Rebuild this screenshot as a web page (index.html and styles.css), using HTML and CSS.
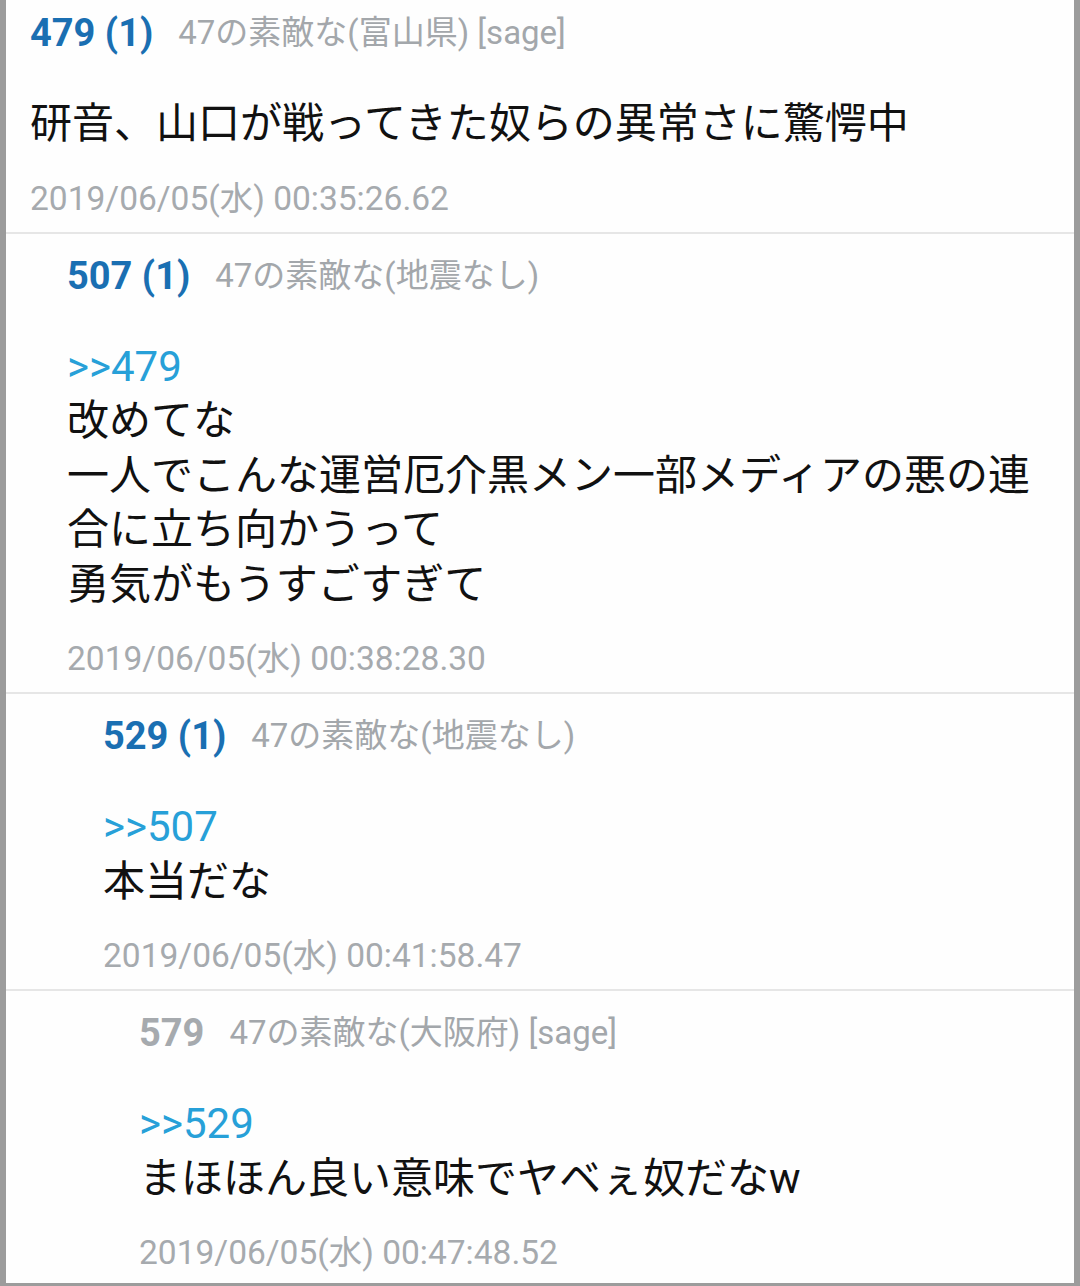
FILE: index.html
```html
<!DOCTYPE html>
<html lang="ja">
<head>
<meta charset="utf-8">
<title>thread</title>
<link rel="stylesheet" href="styles.css">
</head>
<body>
<div class="frame">
  <div class="post d0 first">
    <div class="head"><span class="num">479 (1)</span><span class="name">47の素敵な(富山県) [sage]</span></div>
    <div class="body">研音、山口が戦ってきた奴らの異常さに驚愕中</div>
    <div class="date">2019/06/05(水) 00:35:26.62</div>
  </div>
  <div class="post d1">
    <div class="head"><span class="num">507 (1)</span><span class="name">47の素敵な(地震なし)</span></div>
    <div class="body"><span class="anchor">&gt;&gt;479</span><br>改めてな<br>一人でこんな運営厄介黒メン一部メディアの悪の連<br>合に立ち向かうって<br>勇気がもうすごすぎて</div>
    <div class="date">2019/06/05(水) 00:38:28.30</div>
  </div>
  <div class="post d2">
    <div class="head"><span class="num">529 (1)</span><span class="name">47の素敵な(地震なし)</span></div>
    <div class="body"><span class="anchor">&gt;&gt;507</span><br>本当だな</div>
    <div class="date">2019/06/05(水) 00:41:58.47</div>
  </div>
  <div class="post d3 last">
    <div class="head"><span class="num plain">579</span><span class="name">47の素敵な(大阪府) [sage]</span></div>
    <div class="body"><span class="anchor">&gt;&gt;529</span><br>まほほん良い意味でヤベぇ奴だなw</div>
    <div class="date">2019/06/05(水) 00:47:48.52</div>
  </div>
</div>
</body>
</html>
```

FILE: styles.css
```css
html, body {
  margin: 0;
  padding: 0;
  background: #ffffff;
}
body {
  font-family: Roboto, "Noto Sans CJK JP", sans-serif;
}
.frame {
  width: 1080px;
  height: 1286px;
  box-sizing: border-box;
  border-left: 6px solid #9c9c9c;
  border-right: 6px solid #9c9c9c;
  border-bottom: 3px solid #9c9c9c;
  overflow: hidden;
  background: #fefefe;
}
.post {
  padding-top: 22px;
  padding-bottom: 15px;
  border-bottom: 2px solid #e6e6e6;
}
.post.first { padding-top: 13px; }
.post.last { border-bottom: none; }
.d0 { padding-left: 24px; }
.d1 { padding-left: 61px; }
.d2 { padding-left: 97px; }
.d3 { padding-left: 133px; }
.head {
  height: 40px;
  line-height: 40px;
  display: flex;
  align-items: center;
  gap: 25px;
  white-space: nowrap;
}
.num {
  font-family: Roboto, sans-serif;
  font-weight: 700;
  font-size: 38px;
  color: #1a6fb2;
}
.num.plain { color: #a6aaae; }
.name {
  font-size: 33px;
  color: #a3a7ab;
}
.body {
  margin-top: 44px;
  font-size: 42px;
  line-height: 54.5px;
  color: #111111;
  white-space: nowrap;
}
.anchor {
  font-family: Roboto, sans-serif;
  font-size: 42px;
  color: #27a0d8;
}
.date {
  margin-top: 29px;
  height: 36px;
  line-height: 36px;
  font-size: 33.5px;
  color: #a6aaae;
}
```
